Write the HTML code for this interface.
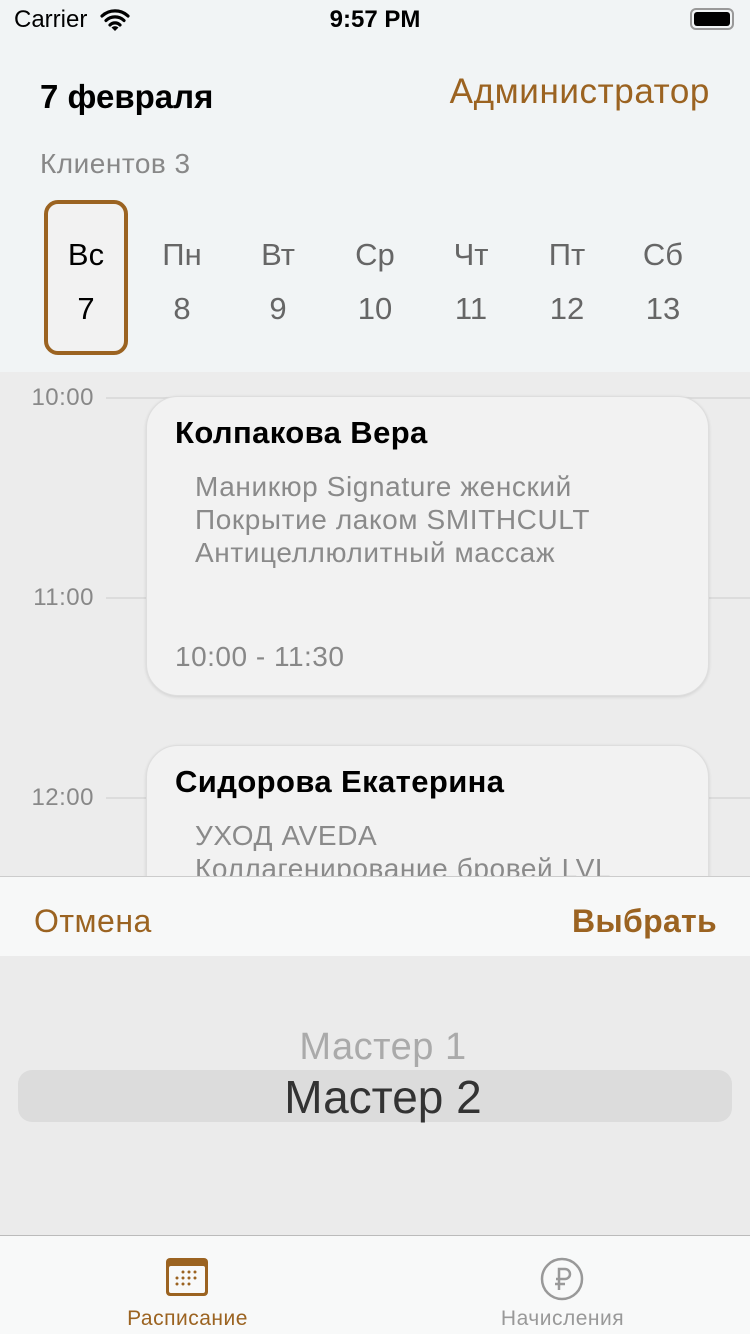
<!DOCTYPE html>
<html><head><meta charset="utf-8"><style>
*{margin:0;padding:0;box-sizing:border-box}
body{width:750px;height:1334px;overflow:hidden;position:relative;background:#f1f4f5;font-family:"Liberation Sans","Noto Sans CJK SC",sans-serif}
.a{position:absolute;white-space:nowrap}
.br{color:#9b6321}
.day{position:absolute;top:228px;width:80px;text-align:center;color:#666;font-size:31px;line-height:54px}
.line{position:absolute;left:106px;right:0;height:2px;background:#dcdcdc}
.t{position:absolute;left:0;width:94px;text-align:right;color:#888;font-size:24px;letter-spacing:.5px}
.card{position:absolute;left:146px;width:563px;background:#f2f2f2;border-radius:32px;border:1px solid #dedede;box-shadow:0 1px 3px rgba(0,0,0,.12)}
.svc{color:#8a8a8a;font-size:28px;line-height:33px;letter-spacing:.6px}
</style></head><body>
<div class="a" style="left:14px;top:6px;font-size:24px;color:#000">Carrier</div>
<svg class="a" style="left:100px;top:8px" width="30" height="24" viewBox="0 0 30 24"><path d="M2 8a19 19 0 0 1 26 0M6 12.5a13 13 0 0 1 18 0M10 17a7 7 0 0 1 10 0" stroke="#000" stroke-width="3.2" fill="none" stroke-linecap="round"/><path d="M11.5 19.5L15 23 18.5 19.5a5 5 0 0 0-7 0z" fill="#000"/></svg>
<div class="a" style="left:0;width:750px;text-align:center;top:6px;font-size:24px;font-weight:bold">9:57 PM</div>
<div class="a" style="left:690px;top:8px;width:44px;height:22px;border:2px solid #999;border-radius:6px;padding:2px"><div style="background:#000;width:100%;height:100%;border-radius:3px"></div></div>
<div class="a" style="left:40px;top:78px;font-size:33px;font-weight:bold">7 февраля</div>
<div class="a br" style="right:40px;top:72px;font-size:35px;letter-spacing:.6px">Администратор</div>
<div class="a" style="left:40px;top:148px;font-size:28px;color:#888;letter-spacing:.5px">Клиентов 3</div>
<div class="a" style="left:44px;top:200px;width:84px;height:155px;border:4px solid #9b6321;border-radius:14px;background:#f2f2f2"></div>
<div class="day" style="left:46px;color:#000">Вс<br>7</div>
<div class="day" style="left:142px">Пн<br>8</div>
<div class="day" style="left:238px">Вт<br>9</div>
<div class="day" style="left:335px">Ср<br>10</div>
<div class="day" style="left:431px">Чт<br>11</div>
<div class="day" style="left:527px">Пт<br>12</div>
<div class="day" style="left:623px">Сб<br>13</div>
<div class="a" style="left:0;top:372px;width:750px;height:505px;background:#ececec;overflow:hidden">
<div class="line" style="top:25px"></div><div class="t" style="top:12px">10:00</div>
<div class="line" style="top:225px"></div><div class="t" style="top:212px">11:00</div>
<div class="line" style="top:425px"></div><div class="t" style="top:412px">12:00</div>
<div class="card" style="top:24px;height:300px">
<div class="a" style="left:28px;top:18px;font-size:31px;font-weight:bold;letter-spacing:.4px">Колпакова Вера</div>
<div class="a svc" style="left:48px;top:73px">Маникюр Signature женский<br>Покрытие лаком SMITHCULT<br>Антицеллюлитный массаж</div>
<div class="a" style="left:28px;top:244px;font-size:28px;color:#888;letter-spacing:.5px">10:00 - 11:30</div></div>
<div class="card" style="top:373px;height:300px">
<div class="a" style="left:28px;top:18px;font-size:31px;font-weight:bold;letter-spacing:.4px">Сидорова Екатерина</div>
<div class="a svc" style="left:48px;top:73px">УХОД AVEDA<br>Коллагенирование бровей LVL</div></div>
</div>
<div class="a" style="left:0;top:876px;width:750px;height:80px;background:#f7f8f8;border-top:1px solid #ccc">
<div class="a br" style="left:34px;top:26px;font-size:32px;letter-spacing:.5px">Отмена</div>
<div class="a br" style="right:33px;top:26px;font-size:32px;font-weight:bold;letter-spacing:.3px">Выбрать</div></div>
<div class="a" style="left:0;top:956px;width:750px;height:280px;background:#ebebeb">
<div class="a" style="left:0;width:766px;text-align:center;top:70px;font-size:38px;color:#aaa;letter-spacing:.5px">Мастер 1</div>
<div class="a" style="left:18px;top:114px;width:714px;height:52px;background:#dcdcdc;border-radius:14px"></div>
<div class="a" style="left:0;width:766px;text-align:center;top:114px;font-size:46px;color:#333">Мастер 2</div></div>
<div class="a" style="left:0;top:1235px;width:750px;height:99px;background:#f8f9f9;border-top:1px solid #bbb">
<svg class="a" style="left:165px;top:21px" width="44" height="40" viewBox="0 0 44 40"><rect x="1" y="1" width="42" height="38" rx="4" fill="#9b6321"/><rect x="4" y="9" width="36" height="27" rx="2" fill="#f8f9f9"/><g fill="#9b6321"><circle cx="18" cy="15" r="1.5"/><circle cx="24" cy="15" r="1.5"/><circle cx="30" cy="15" r="1.5"/><circle cx="12" cy="21" r="1.5"/><circle cx="18" cy="21" r="1.5"/><circle cx="24" cy="21" r="1.5"/><circle cx="30" cy="21" r="1.5"/><circle cx="12" cy="27" r="1.5"/><circle cx="18" cy="27" r="1.5"/><circle cx="24" cy="27" r="1.5"/></g></svg>
<div class="a br" style="left:0;width:375px;text-align:center;top:71px;font-size:21px;letter-spacing:.5px">Расписание</div>
<svg class="a" style="left:540px;top:21px" width="44" height="44" viewBox="0 0 44 44"><circle cx="22" cy="22" r="20" stroke="#999" stroke-width="2.5" fill="none"/><path d="M19 33V12h6a5 5 0 0 1 0 10h-9M15 27h10" stroke="#999" stroke-width="2.5" fill="none"/></svg>
<div class="a" style="left:375px;width:375px;text-align:center;top:71px;font-size:21px;color:#999;letter-spacing:.5px">Начисления</div></div>
</body></html>
